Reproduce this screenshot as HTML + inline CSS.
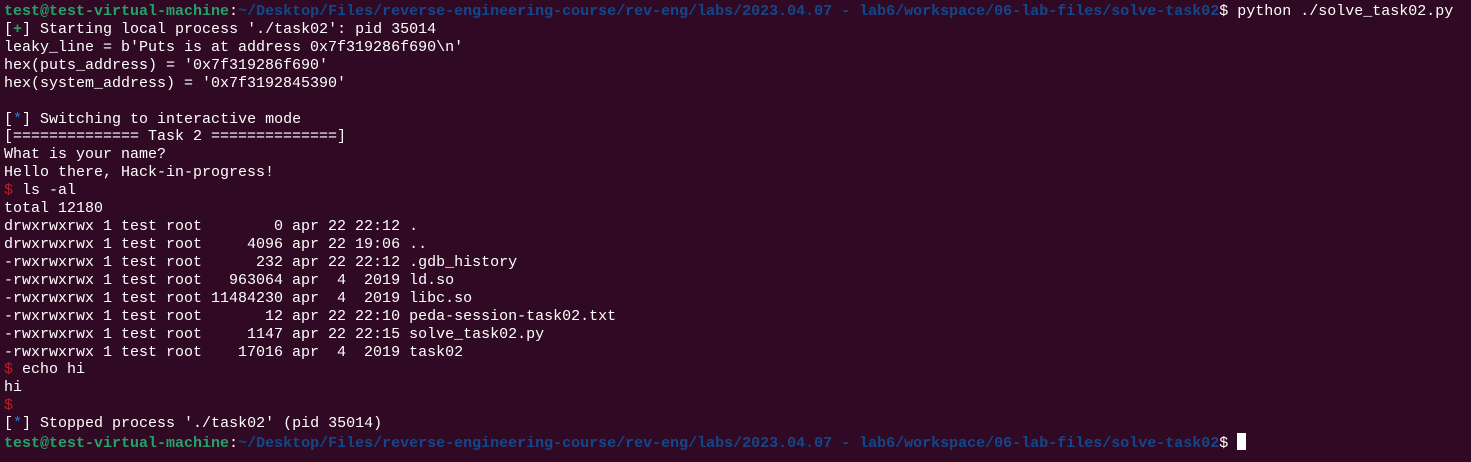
<!DOCTYPE html>
<html><head><meta charset="utf-8"><style>
html,body{margin:0;padding:0;background:#300a24;width:1471px;height:462px;overflow:hidden}
pre{margin:0;position:absolute;left:4px;top:3px;font-family:"Liberation Mono","DejaVu Sans Mono",monospace;font-size:15px;line-height:17.92px;color:#ffffff;white-space:pre}
.g{color:#26a269;font-weight:bold}.b{color:#12488b;font-weight:bold}.r{color:#c01c28}.bl{color:#2a7bde}
.cur{display:inline-block;width:9px;height:17px;background:#fff;vertical-align:-3px}
</style></head><body>
<pre><span class="g">test@test-virtual-machine</span>:<span class="b">~/Desktop/Files/reverse-engineering-course/rev-eng/labs/2023.04.07 - lab6/workspace/06-lab-files/solve-task02</span>$ python ./solve_task02.py
[<span class="g">+</span>] Starting local process './task02': pid 35014
leaky_line = b'Puts is at address 0x7f319286f690\n'
hex(puts_address) = '0x7f319286f690'
hex(system_address) = '0x7f3192845390'

[<span class="bl">*</span>] Switching to interactive mode
[============== Task 2 ==============]
What is your name?
Hello there, Hack-in-progress!
<span class="r">$</span> ls -al
total 12180
drwxrwxrwx 1 test root        0 apr 22 22:12 .
drwxrwxrwx 1 test root     4096 apr 22 19:06 ..
-rwxrwxrwx 1 test root      232 apr 22 22:12 .gdb_history
-rwxrwxrwx 1 test root   963064 apr  4  2019 ld.so
-rwxrwxrwx 1 test root 11484230 apr  4  2019 libc.so
-rwxrwxrwx 1 test root       12 apr 22 22:10 peda-session-task02.txt
-rwxrwxrwx 1 test root     1147 apr 22 22:15 solve_task02.py
-rwxrwxrwx 1 test root    17016 apr  4  2019 task02
<span class="r">$</span> echo hi
hi
<span class="r">$</span>
[<span class="bl">*</span>] Stopped process './task02' (pid 35014)
<span class="g">test@test-virtual-machine</span>:<span class="b">~/Desktop/Files/reverse-engineering-course/rev-eng/labs/2023.04.07 - lab6/workspace/06-lab-files/solve-task02</span>$ <span class="cur"></span></pre>
</body></html>
